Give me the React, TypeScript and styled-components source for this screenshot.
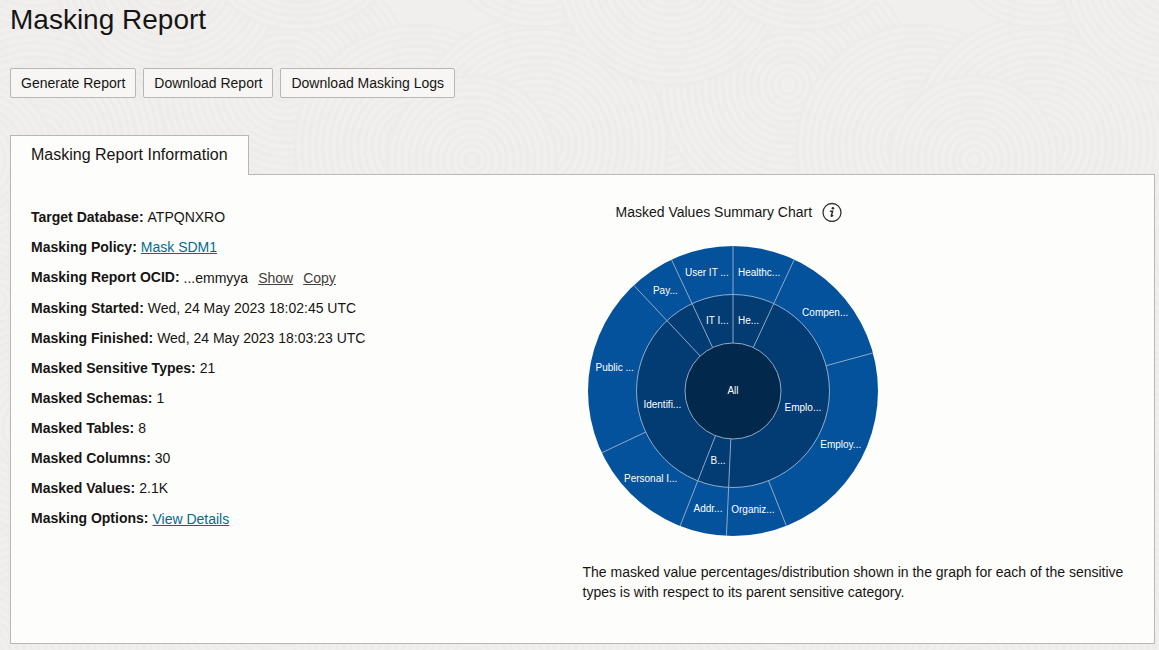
import React from "react";
import styled, { createGlobalStyle } from "styled-components";

const GlobalStyle = createGlobalStyle`
  * { box-sizing: border-box; }
  html, body { margin: 0; min-height: 100%; background: #f0efed; }
  body {
    font-family: "Liberation Sans", Arial, sans-serif;
    font-size: 14px;
    line-height: 20px;
    color: #161513;
  }
`;

const Page = styled.div`
  position: relative;
  min-height: 100vh;
`;

const Backdrop = styled.svg`
  position: absolute;
  inset: 0;
  width: 100%;
  height: 100%;
`;

const Content = styled.main`
  position: relative;
  padding: 2px 4px 6px 10px;
`;

const Title = styled.h1`
  margin: 0;
  font-size: 28px;
  line-height: 36px;
  font-weight: 400;
`;

const Toolbar = styled.div`
  display: flex;
  gap: 7px;
  margin-top: 30px;
`;

const ActionButton = styled.button`
  height: 30px;
  padding: 0 10px;
  border: 1px solid #bab6b1;
  border-radius: 2px;
  background: #f7f6f4;
  color: #161513;
  font: inherit;
  cursor: pointer;
`;

const TabList = styled.div`
  position: relative;
  z-index: 1;
  display: flex;
  margin: 37px 0 -1px;
`;

const Tab = styled.button`
  height: 40px;
  padding: 0 20px 2px;
  border: 1px solid #bab6b1;
  border-bottom: 0;
  background: #fdfdfb;
  color: #161513;
  font: inherit;
  font-size: 16px;
`;

const Panel = styled.section`
  display: grid;
  grid-template-columns: 1fr 1fr;
  padding: 27px 0 41px;
  border: 1px solid #bab6b1;
  background: #fdfdfb;
`;

const Details = styled.dl`
  display: flex;
  flex-direction: column;
  gap: 10px;
  margin: 5px 0 0;
  padding-left: 20px;
`;

const DetailRow = styled.div`
  display: flex;
  gap: 4px;
`;

const Term = styled.dt`
  font-weight: 700;
`;

const Value = styled.dd<{ $lowered?: boolean }>`
  display: flex;
  gap: 10px;
  margin: 0;
  padding-top: ${(p) => (p.$lowered ? 1 : 0)}px;
`;

const TextLink = styled.a<{ $muted?: boolean }>`
  color: ${(p) => (p.$muted ? "#45413d" : "#006b8f")};
  text-decoration: underline;
  text-underline-offset: 1px;
`;

const Summary = styled.div`
  padding-right: 20px;
`;

const ChartHeading = styled.div`
  display: flex;
  align-items: center;
  gap: 10px;
  padding-left: 33px;
`;

const ChartTitle = styled.h2`
  margin: 0;
  font-size: 14px;
  font-weight: 400;
`;

const InfoButton = styled.button`
  display: flex;
  padding: 0;
  border: 0;
  background: none;
  color: #33302d;
`;

const ChartSvg = styled.svg`
  display: block;
  margin: 23px 0 25px 4px;
  font-size: 10px;
`;

const Note = styled.p`
  margin: 0;
`;

/* Sunburst */

type Slice = { from: number; to: number; label: string };

const categories: Slice[] = [
  { from: 0, to: 25, label: "He..." },
  { from: 25, to: 182.6, label: "Emplo..." },
  { from: 182.6, to: 201.4, label: "B..." },
  { from: 201.4, to: 316.8, label: "Identifi..." },
  { from: 316.8, to: 334.9, label: "" },
  { from: 334.9, to: 360, label: "IT I..." },
];

const types: Slice[] = [
  { from: 0, to: 25, label: "Healthc..." },
  { from: 25, to: 74.8, label: "Compen..." },
  { from: 74.8, to: 158.4, label: "Employ..." },
  { from: 158.4, to: 182.6, label: "Organiz..." },
  { from: 182.6, to: 201.4, label: "Addr..." },
  { from: 201.4, to: 244.8, label: "Personal I..." },
  { from: 244.8, to: 316.8, label: "Public ..." },
  { from: 316.8, to: 334.9, label: "Pay..." },
  { from: 334.9, to: 360, label: "User IT ..." },
];

const polar = (r: number, deg: number) => {
  const a = (deg * Math.PI) / 180;
  return { x: r * Math.sin(a), y: -r * Math.cos(a) };
};

const LINE = "#8ea9c6";

function Ring({ slices, inner, outer, fill }: { slices: Slice[]; inner: number; outer: number; fill: string }) {
  return (
    <g>
      <circle r={outer} fill={fill} />
      {slices.map((s) => {
        const a = polar(inner, s.from);
        const b = polar(outer, s.from);
        const c = polar((inner + outer) / 2, (s.from + s.to) / 2);
        return (
          <g key={s.from}>
            <line x1={a.x} y1={a.y} x2={b.x} y2={b.y} stroke={LINE} />
            {s.label && (
              <text x={c.x} y={c.y + 3} fill="#fff" textAnchor="middle">
                {s.label}
              </text>
            )}
          </g>
        );
      })}
    </g>
  );
}

function Sunburst() {
  return (
    <ChartSvg width="292" height="292" viewBox="-146 -146 292 292" role="img" aria-label="Masked Values Summary Chart">
      <Ring slices={types} inner={96} outer={145} fill="#05529c" />
      <Ring slices={categories} inner={48} outer={96} fill="#033b73" />
      <circle r="96.5" fill="none" stroke={LINE} />
      <circle r="48" fill="#02284b" stroke={LINE} />
      <text y="3" fill="#fff" textAnchor="middle">
        All
      </text>
    </ChartSvg>
  );
}

/* Combed-sand backdrop made of overlapping ringed discs */

const discs = [
  [160, 440, 130], [290, 350, 130], [420, 450, 130], [35, 330, 130],
  [90, 240, 120], [350, 240, 120], [500, 300, 120], [200, 250, 120],
  [286, 85, 128], [417, 147, 122], [35, 145, 130], [-30, 160, 84],
  [35, -75, 102], [170, -30, 115], [300, -80, 110],
];

function Disc({ x, y, r }: { x: number; y: number; r: number }) {
  const rings = [];
  for (let i = r; i > 2; i -= 7) rings.push(i);
  return (
    <g>
      <circle cx={x} cy={y} r={r} fill="#f0efed" />
      {rings.map((i) => (
        <circle key={i} cx={x} cy={y} r={i} fill="none" stroke="#edecea" strokeWidth="3" />
      ))}
    </g>
  );
}

function SandBackdrop() {
  return (
    <Backdrop aria-hidden="true">
      <defs>
        <pattern id="sand" width="502" height="502" patternUnits="userSpaceOnUse">
          {discs.flatMap(([x, y, r]) =>
            [-502, 0, 502].flatMap((dx) =>
              [0, 502].map((dy) => <Disc key={`${x},${y},${dx},${dy}`} x={x + dx} y={y + dy} r={r} />)
            )
          )}
        </pattern>
      </defs>
      <rect width="100%" height="100%" fill="url(#sand)" />
    </Backdrop>
  );
}

function InfoIcon() {
  return (
    <svg width="20" height="20" viewBox="0 0 20 20" fill="none" aria-hidden="true">
      <circle cx="10" cy="10.5" r="9" stroke="currentColor" strokeWidth="1.3" />
      <circle cx="10.9" cy="6.3" r="1.3" fill="currentColor" />
      <path d="M7.9 9.2h2.7L9.3 13.7c-.2.9.7.8 1.9-.4" stroke="currentColor" strokeWidth="1.5" />
    </svg>
  );
}

const rows: { term: string; value: React.ReactNode; lowered?: boolean }[] = [
  { term: "Target Database:", value: "ATPQNXRO" },
  { term: "Masking Policy:", value: <TextLink href="#policy">Mask SDM1</TextLink> },
  {
    term: "Masking Report OCID:",
    lowered: true,
    value: (
      <>
        <span>...emmyya</span>
        <TextLink $muted href="#show">Show</TextLink>
        <TextLink $muted href="#copy">Copy</TextLink>
      </>
    ),
  },
  { term: "Masking Started:", value: "Wed, 24 May 2023 18:02:45 UTC" },
  { term: "Masking Finished:", value: "Wed, 24 May 2023 18:03:23 UTC" },
  { term: "Masked Sensitive Types:", value: "21" },
  { term: "Masked Schemas:", value: "1" },
  { term: "Masked Tables:", value: "8" },
  { term: "Masked Columns:", value: "30" },
  { term: "Masked Values:", value: "2.1K" },
  { term: "Masking Options:", lowered: true, value: <TextLink href="#options">View Details</TextLink> },
];

export default function App() {
  return (
    <Page>
      <GlobalStyle />
      <SandBackdrop />
      <Content>
        <Title>Masking Report</Title>
        <Toolbar>
          <ActionButton>Generate Report</ActionButton>
          <ActionButton>Download Report</ActionButton>
          <ActionButton>Download Masking Logs</ActionButton>
        </Toolbar>
        <TabList role="tablist">
          <Tab role="tab" aria-selected="true">Masking Report Information</Tab>
        </TabList>
        <Panel role="tabpanel">
          <Details>
            {rows.map((r) => (
              <DetailRow key={r.term}>
                <Term>{r.term}</Term>
                <Value $lowered={r.lowered}>{r.value}</Value>
              </DetailRow>
            ))}
          </Details>
          <Summary>
            <ChartHeading>
              <ChartTitle>Masked Values Summary Chart</ChartTitle>
              <InfoButton aria-label="About this chart">
                <InfoIcon />
              </InfoButton>
            </ChartHeading>
            <Sunburst />
            <Note>
              The masked value percentages/distribution shown in the graph for each of the sensitive types is with
              respect to its parent sensitive category.
            </Note>
          </Summary>
        </Panel>
      </Content>
    </Page>
  );
}
